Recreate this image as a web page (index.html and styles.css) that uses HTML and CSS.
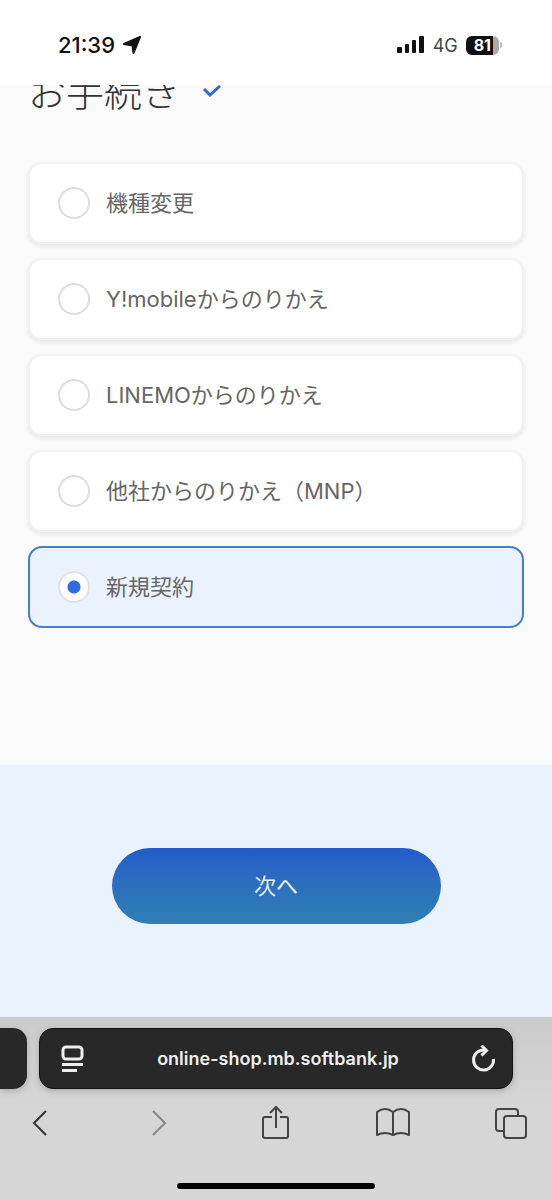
FILE: index.html
```
<!DOCTYPE html>
<html lang="ja">
<head>
<meta charset="utf-8">
<meta name="viewport" content="width=device-width, initial-scale=1">
<title>お手続き</title>
<link rel="stylesheet" href="styles.css">
</head>
<body>
<header class="status">
  <div class="status-group">
    <span class="clock">21:39</span>
    <svg class="locate" viewBox="0 0 18 18" width="18" height="18" aria-hidden="true"><path d="M17 1 L10.500 17 L9.500 9.500 L1 8 Z" fill="#111" stroke="#111" stroke-width="2" stroke-linejoin="round"/></svg>
  </div>
  <div class="status-group">
    <svg viewBox="0 0 28 18" width="28" height="18" aria-hidden="true"><g fill="#111"><rect x="0" y="11" width="5" height="6" rx="1"/><rect x="8" y="8" width="4" height="9" rx="1"/><rect x="15" y="4" width="4" height="13" rx="1"/><rect x="22" y="0" width="5" height="17" rx="1"/></g></svg>
    <span class="network">4G</span>
    <div class="battery"><span class="battery-body">81</span><span class="battery-tip"></span></div>
  </div>
</header>

<main class="page">
  <h1 class="title">お手続き
    <svg viewBox="0 0 20 14" width="20" height="14" aria-hidden="true"><path d="M2 4 L8 10 L18 1" fill="none" stroke="#2f6bd0" stroke-width="3"/></svg>
  </h1>
  <form class="options">
    <label class="option"><input type="radio" name="procedure">機種変更</label>
    <label class="option"><input type="radio" name="procedure">Y!mobileからのりかえ</label>
    <label class="option"><input type="radio" name="procedure">LINEMOからのりかえ</label>
    <label class="option"><input type="radio" name="procedure">他社からのりかえ（MNP）</label>
    <label class="option"><input type="radio" name="procedure" checked>新規契約</label>
  </form>
</main>

<section class="action">
  <button class="next" type="button">次へ</button>
</section>

<footer class="browser">
  <div class="tabs">
    <div class="tab-previous"></div>
    <div class="address">
      <button class="icon" type="button" aria-label="ページメニュー">
        <svg viewBox="0 0 26 28" width="26" height="28"><g fill="none" stroke="#eee" stroke-width="3"><rect x="3" y="2" width="19" height="12" rx="3"/><path d="M2 19.500 H23 M2 25.500 H17"/></g></svg>
      </button>
      <span class="url">online-shop.mb.softbank.jp</span>
      <button class="icon" type="button" aria-label="再読み込み">
        <svg viewBox="0 0 26 28" width="26" height="28"><g fill="none" stroke="#eee" stroke-width="3"><path d="M23.500 14 A10 10 0 1 1 13.500 5 H16"/><path d="M11.500 0.500 L16.500 5.500 L11.500 10.500"/></g></svg>
      </button>
    </div>
  </div>
  <nav class="tools">
    <button class="icon" type="button" aria-label="戻る"><svg viewBox="0 0 32 36" width="32" height="36"><path d="M22 6 L10 18 L22 30" fill="none" stroke="#333" stroke-width="2"/></svg></button>
    <button class="icon" type="button" aria-label="進む"><svg viewBox="0 0 32 36" width="32" height="36"><path d="M12 6 L24 18 L12 30" fill="none" stroke="#888" stroke-width="2"/></svg></button>
    <button class="icon" type="button" aria-label="共有"><svg viewBox="0 0 32 36" width="32" height="36"><path d="M14 12 H7 Q5 12 5 14 V31 Q5 33 7 33 H28 Q30 33 30 31 V14 Q30 12 28 12 H22 M18 23 V2 M12 8 L18 2 L24 8" fill="none" stroke="#444" stroke-width="2"/></svg></button>
    <button class="icon" type="button" aria-label="ブックマーク"><svg viewBox="0 0 36 36" width="36" height="36"><path d="M19 7 Q11 1 3 7 V30 Q11 26 19 30 Q27 26 35 30 V7 Q27 1 19 7 V30" fill="none" stroke="#444" stroke-width="2" stroke-linejoin="round"/></svg></button>
    <button class="icon" type="button" aria-label="タブ"><svg viewBox="0 0 32 36" width="32" height="36"><g fill="none" stroke="#444" stroke-width="2"><rect x="9" y="11" width="22" height="22" rx="3"/><path d="M9 26 H4 Q1 26 1 23 V7 Q1 4 4 4 H20 Q23 4 23 7 V11"/></g></svg></button>
  </nav>
  <div class="home"></div>
</footer>
</body>
</html>
```

FILE: styles.css
```
* {
  box-sizing: border-box;
}

body {
  margin: 0;
  min-height: 100vh;
  display: flex;
  flex-direction: column;
  background: #fafafa;
  color: #666;
  font-family: Inter, "Noto Sans CJK JP", sans-serif;
  font-size: 22px;
}

button {
  font: inherit;
  border: 0;
  padding: 0;
  background: none;
}

svg {
  display: block;
}

.status {
  display: flex;
  justify-content: space-between;
  align-items: center;
  height: 85px;
  padding: 5px 50px 0 58px;
  background: #fff;
  color: #111;
}

.status-group {
  display: flex;
  align-items: center;
  gap: 8px;
}

.clock {
  font-weight: 500;
}

.network {
  font-size: 18px;
  color: #444;
}

.battery {
  display: flex;
  align-items: center;
  gap: 1px;
}

.battery-body {
  padding: 0 8px;
  border-radius: 6px;
  background: linear-gradient(to right, #111 81%, #aaa 81%);
  color: #fff;
  font-size: 16px;
  font-weight: 700;
  line-height: 19px;
}

.battery-tip {
  width: 2px;
  height: 6px;
  border-radius: 0 2px 2px 0;
  background: #bbb;
}

.page {
  flex: 1;
  overflow: hidden;
  padding: 0 28px;
}

.title {
  display: flex;
  align-items: center;
  gap: 22px;
  margin: -15px 0 48px;
  color: #333;
  font-size: 38px;
  font-weight: 300;
  line-height: 44px;
}

.options {
  display: grid;
  gap: 14px;
}

.option {
  display: flex;
  align-items: center;
  gap: 16px;
  height: 82px;
  padding: 0 28px;
  border: 2px solid #f2f2f2;
  border-radius: 14px;
  background: #fff;
  box-shadow: 0 2px 4px #e4e4e4;
  line-height: 28px;
}

.option:has(input:checked) {
  border-color: #4b7cc9;
  background: #eaf2fd;
  box-shadow: none;
}

.option input {
  appearance: none;
  width: 32px;
  height: 32px;
  margin: 0;
  border: 2px solid #d9dde2;
  border-radius: 50%;
  background: #fff;
}

.option input:checked {
  border-color: #dfe1e8;
  background: radial-gradient(circle, #2d6be0 6px, #fff 7px);
}

.action {
  display: flex;
  justify-content: center;
  padding: 83px 28px 93px;
  background: #eaf2fd;
}

.next {
  width: 100%;
  max-width: 329px;
  height: 76px;
  border-radius: 38px;
  background: linear-gradient(#225bcb, #2c6cc0 40%, #2f80b4);
  color: #e2f3ff;
  line-height: 28px;
}

.browser {
  padding: 11px 0;
  background: linear-gradient(#cbcbcb, #d6d6d6 50%);
}

.tabs {
  display: flex;
  gap: 12px;
  padding-right: 39px;
}

.tab-previous {
  width: 27px;
  border-radius: 0 14px 14px 0;
  background: #282828;
  box-shadow: 0 2px 6px #aaa;
}

.address {
  flex: 1;
  display: flex;
  align-items: center;
  justify-content: space-between;
  height: 61px;
  padding: 0 16px 0 20px;
  border-radius: 14px;
  border: 1px solid #111;
  background: #282828;
  box-shadow: 0 2px 6px #aaa;
}

.url {
  color: #eee;
  font-size: 18px;
  font-weight: 600;
}

.tools {
  display: flex;
  align-items: center;
  justify-content: space-between;
  padding: 16px 25px 0 24px;
}

.home {
  width: 36%;
  height: 6px;
  margin: 42px auto 0;
  border-radius: 3px;
  background: #000;
}
```
